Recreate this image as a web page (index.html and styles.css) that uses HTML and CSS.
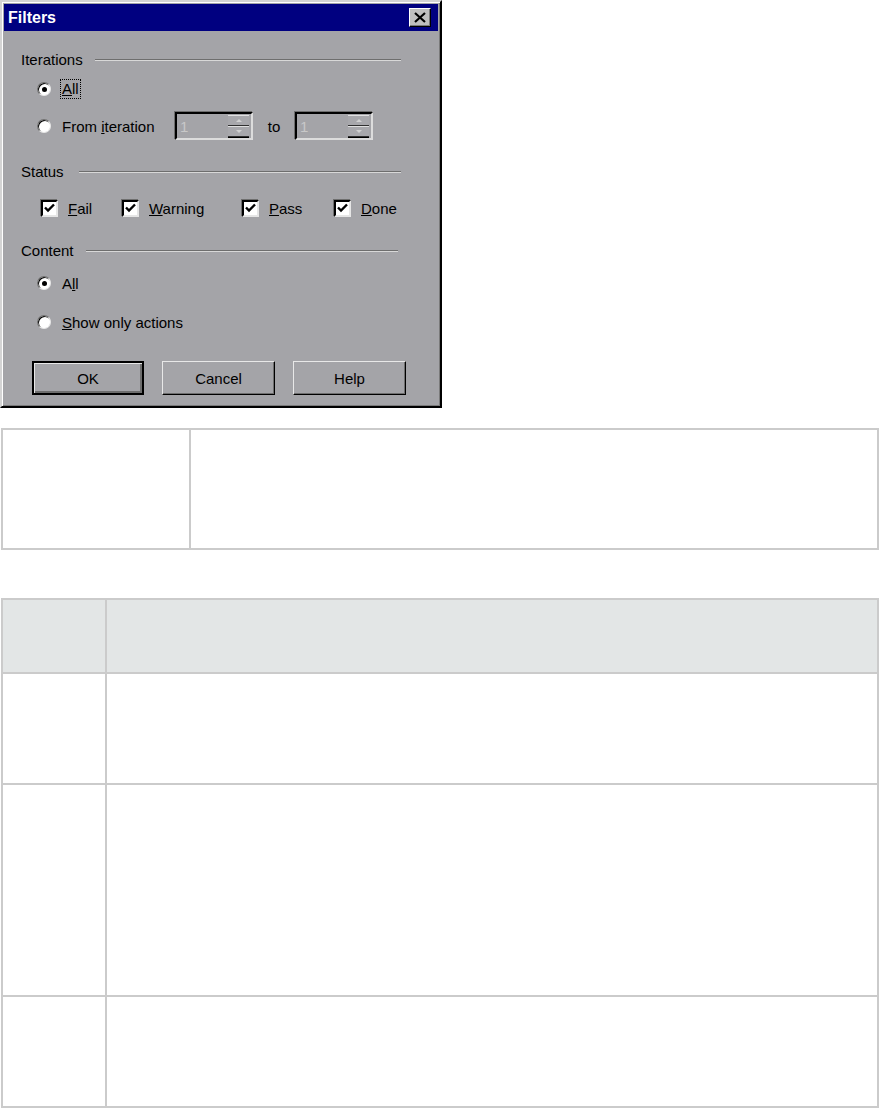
FILE: index.html
```html
<!DOCTYPE html>
<html lang="en">
<head>
  <meta charset="UTF-8">
  <title>Filters</title>
  <link rel="stylesheet" href="styles.css">
</head>
<body>

  <!-- Filters dialog -->
  <div class="dialog">
    <div class="titlebar">
      <span class="title">Filters</span>
      <span class="close-btn">
        <svg width="12" height="11" viewBox="0 0 12 11"><path d="M1 1 L11 10 M11 1 L1 10" stroke="#000" stroke-width="2.2" fill="none"/></svg>
      </span>
    </div>

    <div class="dialog-body">
      <div class="group-head"><span>Iterations</span><span class="rule"></span></div>

      <div class="opt-row first-iter">
        <span class="radio checked"></span>
        <span class="focus"><u>A</u>ll</span>
      </div>

      <div class="opt-row spin-row">
        <span class="radio"></span>
        <span class="from-label">From <u>i</u>teration</span>
        <span class="spin"><span class="spin-val">1</span><span class="spin-btns"><span class="up"></span><span class="down"></span></span></span>
        <span class="to">to</span>
        <span class="spin"><span class="spin-val">1</span><span class="spin-btns"><span class="up"></span><span class="down"></span></span></span>
      </div>

      <div class="group-head status-head"><span>Status</span><span class="rule"></span></div>

      <div class="checks">
        <label class="check-item"><span class="check"><svg width="11" height="10" viewBox="0 0 11 10"><path d="M1 4.5 L4 7.5 L10 1.5" stroke="#000" stroke-width="2.4" fill="none"/></svg></span><span><u>F</u>ail</span></label>
        <label class="check-item"><span class="check"><svg width="11" height="10" viewBox="0 0 11 10"><path d="M1 4.5 L4 7.5 L10 1.5" stroke="#000" stroke-width="2.4" fill="none"/></svg></span><span><u>W</u>arning</span></label>
        <label class="check-item"><span class="check"><svg width="11" height="10" viewBox="0 0 11 10"><path d="M1 4.5 L4 7.5 L10 1.5" stroke="#000" stroke-width="2.4" fill="none"/></svg></span><span><u>P</u>ass</span></label>
        <label class="check-item"><span class="check"><svg width="11" height="10" viewBox="0 0 11 10"><path d="M1 4.5 L4 7.5 L10 1.5" stroke="#000" stroke-width="2.4" fill="none"/></svg></span><span><u>D</u>one</span></label>
      </div>

      <div class="group-head content-head"><span>Content</span><span class="rule"></span></div>

      <div class="opt-row content-all">
        <span class="radio checked"></span>
        <span>A<u>l</u>l</span>
      </div>
      <div class="opt-row content-actions">
        <span class="radio"></span>
        <span><u>S</u>how only actions</span>
      </div>

      <div class="buttons">
        <span class="btn default">OK</span>
        <span class="btn">Cancel</span>
        <span class="btn">Help</span>
      </div>
    </div>
  </div>

  <!-- tables under the dialog -->
  <table class="grid grid-one">
    <tr><td class="c1"></td><td></td></tr>
  </table>

  <table class="grid grid-two">
    <tr class="head"><th class="c1"></th><th></th></tr>
    <tr class="r1"><td class="c1"></td><td></td></tr>
    <tr class="r2"><td class="c1"></td><td></td></tr>
    <tr class="r3"><td class="c1"></td><td></td></tr>
  </table>

</body>
</html>
```

FILE: styles.css
```css
body {
  margin: 0;
  background: #fff;
  font-family: "Liberation Sans", Arial, sans-serif;
  color: #000;
}

/* dialog frame */
.dialog {
  box-sizing: border-box;
  width: 442px;
  height: 408px;
  background: #a4a4a8;
  border: 2px solid;
  border-color: #d4d4d4 #000 #000 #d4d4d4;
  box-shadow: inset 1px 1px #fff, inset -1px -1px #7a7a7a;
  padding: 2px;
  font-size: 15px;
}

.titlebar {
  height: 27px;
  background: #000080;
  display: flex;
  align-items: center;
  justify-content: space-between;
  padding: 0 7px 0 4px;
}

.title {
  color: #fff;
  font-weight: bold;
  font-size: 16px;
}

.close-btn {
  box-sizing: border-box;
  width: 22px;
  height: 19px;
  background: #bfbfbf;
  border: 1px solid;
  border-color: #fff #000 #000 #fff;
  box-shadow: inset -1px -1px #7a7a7a;
  display: flex;
  align-items: center;
  justify-content: center;
}

.dialog-body {
  padding-left: 17px;
}

/* etched group headings */
.group-head {
  width: 380px;
  height: 16px;
  display: flex;
  align-items: center;
  gap: 12px;
  margin-top: 21px;
  line-height: 16px;
}

.group-head .rule {
  flex: 1;
  border-top: 1px solid #6e6e6e;
  border-bottom: 1px solid #d8d8d8;
}

.status-head { margin-top: 24px; gap: 15px; }
.content-head { margin-top: 25px; width: 377px; }

/* radio rows */
.opt-row {
  display: flex;
  align-items: center;
  height: 20px;
  padding-left: 16px;
}

.opt-row .radio { margin-right: 11px; }

.first-iter { margin-top: 11px; }
.spin-row { margin-top: 13px; height: 28px; }
.content-all { margin-top: 14px; }
.content-actions { margin-top: 19px; }

.radio {
  box-sizing: border-box;
  width: 14px;
  height: 14px;
  border-radius: 50%;
  background: #fff;
  border: 1px solid;
  border-color: #6e6e6e #e6e6e6 #e6e6e6 #6e6e6e;
  box-shadow: inset 1px 1px #000;
  display: flex;
  align-items: center;
  justify-content: center;
}

.radio.checked::after {
  content: "";
  width: 5px;
  height: 5px;
  border-radius: 50%;
  background: #000;
}

.focus {
  outline: 1px dotted #000;
  outline-offset: 1px;
  line-height: 16px;
}

.from-label { width: 113px; }

.spin {
  box-sizing: border-box;
  width: 78px;
  height: 28px;
  border: 2px solid;
  border-color: #000 #dcdcdc #dcdcdc #000;
  box-shadow: -1px -1px #6e6e6e;
  display: flex;
  align-items: center;
  justify-content: space-between;
  padding: 1px 2px 1px 3px;
}

.spin-val { color: #c8c8c8; }

.spin-btns {
  display: flex;
  flex-direction: column;
  width: 21px;
  height: 22px;
  border-bottom: 1px solid #000;
}

.spin-btns span {
  flex: 1;
  background: #a8a8ac;
  border-top: 1px solid #e0e0e0;
  border-bottom: 1px solid #303030;
  display: flex;
  align-items: center;
  justify-content: center;
}

.spin-btns .up::after {
  content: "";
  border: 3px solid transparent;
  border-bottom: 3px solid #d0d0d0;
  border-top: 0;
}

.spin-btns .down::after {
  content: "";
  border: 3px solid transparent;
  border-top: 3px solid #d0d0d0;
  border-bottom: 0;
}

.to {
  width: 42px;
  text-align: center;
}

/* status check boxes */
.checks {
  display: grid;
  grid-template-columns: 81px 120px 92px auto;
  margin: 18px 0 0 20px;
  height: 20px;
  align-items: center;
}

.check-item {
  display: flex;
  align-items: center;
  gap: 10px;
}

.check {
  box-sizing: border-box;
  width: 17px;
  height: 17px;
  background: #fff;
  border: 2px solid;
  border-color: #000 #e6e6e6 #e6e6e6 #000;
  box-shadow: -1px -1px #6e6e6e;
  display: flex;
  align-items: center;
  justify-content: center;
}

/* push buttons */
.buttons {
  display: flex;
  gap: 18px;
  margin: 29px 0 0 11px;
}

.btn {
  box-sizing: border-box;
  width: 113px;
  height: 34px;
  display: flex;
  align-items: center;
  justify-content: center;
  border: 1px solid;
  border-color: #e8e8e8 #000 #000 #e8e8e8;
  box-shadow: inset -1px -1px #6e6e6e;
  font-size: 15px;
}

.btn.default {
  width: 112px;
  border: 2px solid #000;
  box-shadow: inset 1px 1px #e8e8e8, inset -2px -2px #6e6e6e;
}

/* tables */
.grid {
  border-collapse: collapse;
  width: 878px;
  margin-left: 1px;
}

.grid td,
.grid th {
  border: 2px solid #cbcbcb;
  padding: 0;
}

.grid-one {
  margin-top: 20px;
}

.grid-one td { height: 118px; }
.grid-one .c1 { width: 186px; }

.grid-two {
  margin-top: 48px;
}

.grid-two .c1 { width: 102px; }
.grid-two .head th { background: #e3e6e6; height: 72px; }
.grid-two .r1 td { height: 109px; }
.grid-two .r2 td { height: 210px; }
.grid-two .r3 td { height: 109px; }
```
